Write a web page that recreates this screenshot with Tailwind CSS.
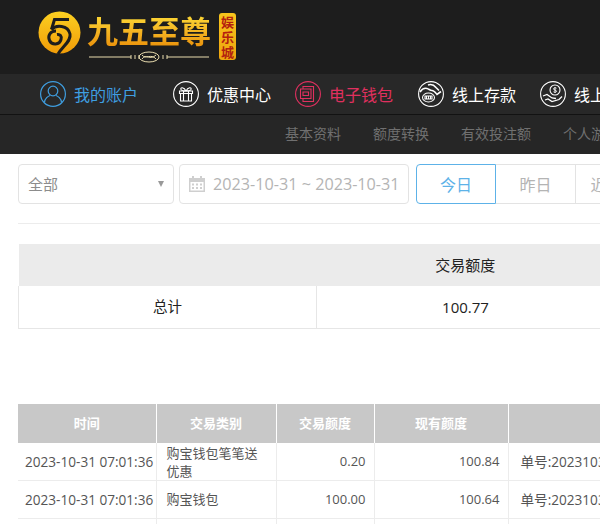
<!DOCTYPE html>
<html lang="en">
<head>
    <meta charset="UTF-8">
    <title>我的账户</title>
    <script src="https://cdn.jsdelivr.net/npm/@tailwindcss/browser@4"></script>
</head>
<body class="w-[600px] h-[524px] overflow-hidden bg-white font-['Open_Sans','Noto_Sans_CJK_SC',sans-serif] text-[14px] text-[#333]">

    <!-- logo bar -->
    <header class="h-[74px] bg-[#1d1d1d] flex items-start pl-[38px] pt-[11px]">
        <svg class="w-[43px] h-[44px] shrink-0" viewBox="0 0 43 44">
            <defs>
                <linearGradient id="coin" x1="0" y1="0" x2="0" y2="1">
                    <stop offset="0" stop-color="#fcd021"/>
                    <stop offset="1" stop-color="#f09c08"/>
                </linearGradient>
            </defs>
            <circle cx="21.5" cy="21.5" r="21" fill="url(#coin)"/>
            <path d="M31 8.500H16.500L13.500 18.500" fill="none" stroke="#1d1d1d" stroke-width="3"/>
            <path d="M13.500 18.500C18 13.500 30 14 32 23C33.500 30 25 35 20 43" fill="none" stroke="#1d1d1d" stroke-width="3"/>
            <path d="M18 20C12 20 9.500 25 11.500 29.500C14 34.500 21.500 34 23 28.500C24 25 22 23 19 23.500" fill="none" stroke="#1d1d1d" stroke-width="3"/>
        </svg>
        <div class="ml-[6px] w-[125px] shrink-0">
            <div class="h-[38px] text-[31px] leading-[38px] font-bold whitespace-nowrap text-transparent bg-clip-text bg-gradient-to-b from-[#ffe23a] to-[#e88d05] font-['Noto_Sans_CJK_SC',serif]">九五至尊</div>
            <svg class="w-[125px] h-[14px] mt-[1px]" viewBox="0 0 125 14">
                <path d="M2 7H44M80 7H122" stroke="#e9dcae" stroke-width="1"/>
                <path d="M44 5v4M48 5v4M52 5v4M76 5v4M80 5v4" stroke="#e9dcae"/>
                <ellipse cx="62" cy="7" rx="10" ry="5" fill="none" stroke="#e9dcae"/>
                <path d="M55 9c4-6 8 2 14-4M55 5c4 5 9-2 14 4" fill="none" stroke="#e9dcae"/>
            </svg>
        </div>
        <div class="ml-[7px] mt-[2px] w-[17px] h-[47px] rounded-[3px] bg-gradient-to-b from-[#f8c51c] to-[#eda40d] flex flex-col items-center justify-center text-[#b3210f] text-[13px] leading-[15px] font-bold font-['Noto_Sans_CJK_SC',serif]">
            <span>娱</span><span>乐</span><span>城</span>
        </div>
    </header>

    <!-- main nav -->
    <nav class="h-[41px] bg-[#282828] border-b border-[#121212] flex items-center whitespace-nowrap text-[16px] text-white font-['Noto_Sans_CJK_SC',sans-serif]">
        <a class="ml-[40px] flex items-center text-[#3f9ee0]">
            <svg class="w-[26px] h-[26px]" viewBox="0 0 26 26" fill="none" stroke="currentColor" stroke-width="1.2">
                <circle cx="13" cy="13" r="12.4"/>
                <circle cx="13" cy="10" r="4.8"/>
                <path d="M4.5 21.5c0-4 4-6.5 5.500-7M21.500 21.500c0-4-4-6.500-5.500-7"/>
            </svg>
            <span class="ml-[8px]">我的账户</span>
        </a>
        <a class="ml-[35px] flex items-center">
            <svg class="w-[26px] h-[26px]" viewBox="0 0 26 26" fill="none" stroke="currentColor" stroke-width="1.1">
                <circle cx="13" cy="13" r="12.400"/>
                <path d="M6.500 10h13v2.500h-13zM7.500 12.500v7.500h11v-7.500M10.500 10v10M15.500 10v10"/>
                <path d="M13 10c-2-4-6-4-5-1.500.5 1 3 1.500 5 1.500zM13 10c2-4 6-4 5-1.500-.5 1-3 1.500-5 1.500z"/>
            </svg>
            <span class="ml-[8px]">优惠中心</span>
        </a>
        <a class="ml-[24px] flex items-center text-[#e0305f]">
            <svg class="w-[26px] h-[26px]" viewBox="0 0 26 26" fill="none" stroke="currentColor" stroke-width="1.1">
                <circle cx="13" cy="13" r="12.400"/>
                <path d="M8 8V5.500h10.500v15H8v-3"/>
                <path d="M5.500 8h10.500v9.500h-10.500z"/>
                <path d="M8 11h5.500v3.500h-5.500z"/>
            </svg>
            <span class="ml-[8px]">电子钱包</span>
        </a>
        <a class="ml-[25px] flex items-center">
            <svg class="w-[26px] h-[26px]" viewBox="0 0 26 26" fill="none" stroke="currentColor" stroke-width="1.1">
                <circle cx="13" cy="13" r="12.400"/>
                <path d="M2 11c2-3 5-4 7-3.500 2 .5 3 2 5 2 2 0 3 1.500 5 4l4-3M10 4c3-1 6 0 8 2.500l3 3" stroke-width="1.600"/>
                <ellipse cx="10.500" cy="16.500" rx="6" ry="4.500"/>
                <path d="M7 15h7v3h-7zM8.500 15v3M10.500 15v3M12.500 15v3"/>
            </svg>
            <span class="ml-[8px]">线上存款</span>
        </a>
        <a class="ml-[24px] flex items-center">
            <svg class="w-[26px] h-[26px]" viewBox="0 0 26 26" fill="none" stroke="currentColor" stroke-width="1.1">
                <circle cx="13" cy="13" r="12.400"/>
                <circle cx="15" cy="9" r="5"/>
                <path d="M15 6v6M16.500 7.200c-1-.7-3-.5-3 .8s3 .8 3 2.200-2 1.300-3 .6" stroke-width=".9"/>
                <path d="M3 15l4-1.500 5 3.500 4 .5M5 19l3-1 4 2.500 7-2 3-3" stroke-width="1.300"/>
            </svg>
            <span class="ml-[8px]">线上取款</span>
        </a>
    </nav>

    <!-- sub nav -->
    <div class="h-[39px] pb-[2px] bg-[#262626] flex items-center whitespace-nowrap text-[14px] text-[#707070] font-['Noto_Sans_CJK_SC',sans-serif] pl-[285px] gap-[32px]">
        <span>基本资料</span>
        <span>额度转换</span>
        <span>有效投注额</span>
        <span>个人游戏记录</span>
    </div>

    <main class="pl-[18px] w-[760px]">
        <!-- filters -->
        <div class="pt-[10px] pb-[19px] border-b border-[#ececec] flex items-stretch h-[70px] text-[16.2px] text-[#b4b4b4]">
            <div class="w-[156px] h-[40px] rounded-[4px] border border-[#e3e3e3] flex items-center justify-between pl-[9px] pr-[9px] text-[#8c8c8c] text-[15px]">
                <span>全部</span>
                <span class="w-0 h-0 border-x-[3.5px] border-x-transparent border-t-[6px] border-t-[#999]"></span>
            </div>
            <div class="ml-[5px] w-[230px] h-[40px] rounded-[4px] border border-[#e3e3e3] flex items-center pl-[9px] whitespace-nowrap">
                <svg class="w-[16px] h-[16px] shrink-0" viewBox="0 0 16 16" fill="#cfcfcf">
                    <path d="M3 0h2v3H3zM11 0h2v3h-2z"/>
                    <path d="M0 2h16v14H0zM1.500 6v8.500h13V6z" fill-rule="evenodd"/>
                    <path d="M3 7.500h2v2H3zM7 7.500h2v2H7zM11 7.500h2v2h-2zM3 11h2v2H3zM7 11h2v2H7zM11 11h2v2h-2z"/>
                </svg>
                <span class="ml-[8px]">2023-10-31 ~ 2023-10-31</span>
            </div>
            <div class="ml-[7px] flex h-[40px] text-[16px] font-['Noto_Sans_CJK_SC',sans-serif]">
                <span class="w-[80px] rounded-l-[4px] border border-[#5db2e8] text-[#5db2e8] flex items-center justify-center">今日</span>
                <span class="w-[79px] border-y border-[#e3e3e3] flex items-center justify-center">昨日</span>
                <span class="w-[79px] border border-[#e3e3e3] flex items-center justify-center">近七日</span>
            </div>
        </div>

        <!-- summary -->
        <table class="mt-[20px] w-[596px] table-fixed border-collapse text-[#222]">
            <thead>
                <tr class="h-[42px] bg-[#ebebeb]">
                    <th class="w-[298px] font-normal"></th>
                    <th class="font-normal text-[15px]">交易额度</th>
                </tr>
            </thead>
            <tbody>
                <tr class="h-[42px] border-b border-[#e6e6e6] text-center">
                    <td class="border-l border-r border-[#e6e6e6] text-[14.5px]">总计</td>
                    <td class="text-[15px]">100.77</td>
                </tr>
            </tbody>
        </table>

        <!-- records -->
        <table class="mt-[75px] w-[700px] table-fixed border-collapse text-[#555] text-[13.6px]">
            <thead>
                <tr class="h-[39px] bg-[#c8c8c8] text-white text-[13px] font-bold">
                    <th class="w-[138px] pt-[1px] border-r border-white">时间</th>
                    <th class="w-[120px] pt-[1px] border-r border-white">交易类别</th>
                    <th class="w-[98px] pt-[1px] border-r border-white">交易颜度</th>
                    <th class="w-[134px] pt-[1px] border-r border-white">现有颜度</th>
                    <th></th>
                </tr>
            </thead>
            <tbody>
                <tr class="h-[38px] border-b border-[#ececec]">
                    <td class="border-r border-[#ececec] pl-[7px] pt-[1px] whitespace-nowrap">2023-10-31 07:01:36</td>
                    <td class="border-r border-[#ececec] pl-[10px] pr-[8px] pt-[1px] leading-[18px] text-[13px]">购宝钱包笔笔送优惠</td>
                    <td class="border-r border-[#ececec] text-right pr-[8px] pt-[1px] text-[13px]">0.20</td>
                    <td class="border-r border-[#ececec] text-right pr-[8px] pt-[1px] text-[13px]">100.84</td>
                    <td class="pl-[12px] pt-[1px] whitespace-nowrap">单号:202310310701</td>
                </tr>
                <tr class="h-[38px] border-b border-[#ececec]">
                    <td class="border-r border-[#ececec] pl-[7px] pt-[1px] whitespace-nowrap">2023-10-31 07:01:36</td>
                    <td class="border-r border-[#ececec] pl-[10px] pr-[8px] pt-[1px] text-[13px]">购宝钱包</td>
                    <td class="border-r border-[#ececec] text-right pr-[8px] pt-[1px] text-[13px]">100.00</td>
                    <td class="border-r border-[#ececec] text-right pr-[8px] pt-[1px] text-[13px]">100.64</td>
                    <td class="pl-[12px] pt-[1px] whitespace-nowrap">单号:202310310701</td>
                </tr>
                <tr class="h-[38px]">
                    <td class="border-r border-[#ececec]"></td>
                    <td class="border-r border-[#ececec]"></td>
                    <td class="border-r border-[#ececec]"></td>
                    <td class="border-r border-[#ececec]"></td>
                    <td></td>
                </tr>
            </tbody>
        </table>
    </main>
</body>
</html>
